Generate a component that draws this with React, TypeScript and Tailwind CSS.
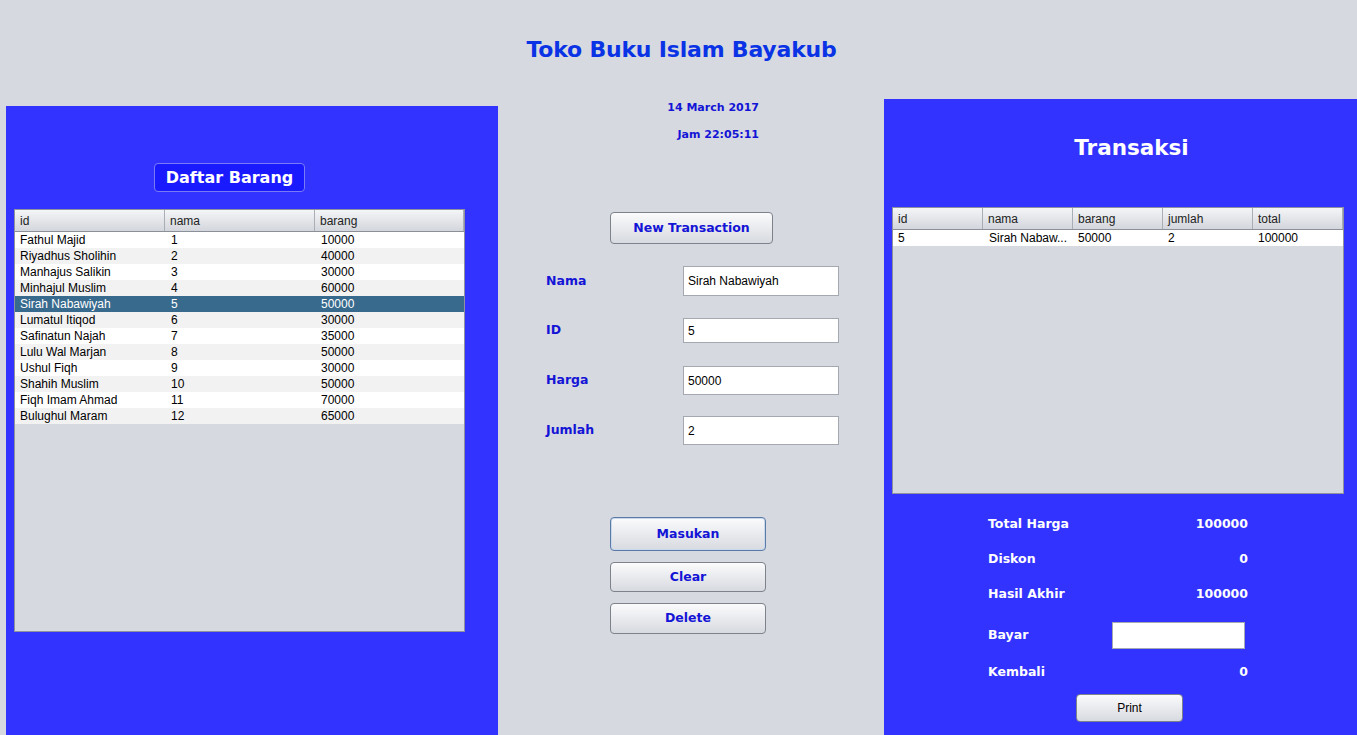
import React from "react";

const barang = [
  ["Fathul Majid", "1", "10000"],
  ["Riyadhus Sholihin", "2", "40000"],
  ["Manhajus Salikin", "3", "30000"],
  ["Minhajul Muslim", "4", "60000"],
  ["Sirah Nabawiyah", "5", "50000"],
  ["Lumatul Itiqod", "6", "30000"],
  ["Safinatun Najah", "7", "35000"],
  ["Lulu Wal Marjan", "8", "50000"],
  ["Ushul Fiqh", "9", "30000"],
  ["Shahih Muslim", "10", "50000"],
  ["Fiqh Imam Ahmad", "11", "70000"],
  ["Bulughul Maram", "12", "65000"],
];

const tahoma = { fontFamily: '"DejaVu Sans", Verdana, sans-serif' };

function HeaderCell({ label, w }: { label: string; w: string }) {
  return (
    <div className={`${w} h-full border-r border-[#a9adb5] bg-gradient-to-b from-[#f4f5f7] to-[#d3d6dc] pl-[5px] flex items-center text-[12px] text-[#222]`}>
      {label}
    </div>
  );
}

function SwingButton({ label, className, focused }: { label: string; className: string; focused?: boolean }) {
  return (
    <button
      className={`${className} rounded-[4px] border ${focused ? "border-[#5b7ba6] shadow-[inset_0_0_0_1px_#c9d8ec]" : "border-[#7d828b]"} bg-gradient-to-b from-[#fbfbfc] to-[#d7dae0] text-[#1414d6] font-bold text-[12.5px] flex items-center justify-center`}
      style={tahoma}
    >
      {label}
    </button>
  );
}

function FormRow({ label, value, h, mb }: { label: string; value: string; h: string; mb: string }) {
  return (
    <div className={`flex items-center ${mb}`}>
      <span className="w-[185px] pl-[48px] text-[12.5px] font-bold text-[#1414d6]" style={tahoma}>{label}</span>
      <div className={`w-[156px] ${h} bg-white border border-[#a4a8b0] flex items-center pl-[4px] text-[12px] text-black`}>
        {value}
      </div>
    </div>
  );
}

export default function App() {
  return (
    <div className="w-[1357px] h-[735px] bg-[#d6d9e0] overflow-hidden" style={{ fontFamily: '"Liberation Sans", Arial, sans-serif' }}>
      <div className="h-[99px] flex items-start justify-center pt-[33px] pl-[6px]">
        <h1 className="text-[22px] font-bold text-[#0a33e6] tracking-[-0.2px]" style={tahoma}>Toko Buku Islam Bayakub</h1>
      </div>

      <div className="flex h-[636px]">
        {/* Daftar Barang */}
        <div className="ml-[6px] mt-[7px] w-[492px] bg-[#3333ff] pt-[57px] pl-[8px]">
          <div className="ml-[140px] w-[151px] h-[29px] rounded-[4px] bg-[#1a1aff] border border-[#7a7af5] flex items-center justify-center text-white font-bold text-[16px]" style={tahoma}>
            Daftar Barang
          </div>
          <div className="mt-[17px] w-[451px] h-[423px] bg-[#d6d9e0] border border-[#8d929c] flex flex-col">
            <div className="h-[22px] flex border-b border-[#8a8f98] shrink-0">
              <HeaderCell label="id" w="w-[150px]" />
              <HeaderCell label="nama" w="w-[150px]" />
              <HeaderCell label="barang" w="w-[149px]" />
            </div>
            {barang.map((r, i) => {
              const sel = i === 4;
              const bg = sel ? "bg-[#386a8d] text-white" : i % 2 === 0 ? "bg-white text-black" : "bg-[#f2f2f2] text-black";
              return (
                <div key={i} className={`h-[16px] flex items-center text-[12px] ${bg}`}>
                  <span className="w-[150px] pl-[5px]">{r[0]}</span>
                  <span className="w-[150px] pl-[6px]">{r[1]}</span>
                  <span className="w-[149px] pl-[6px]">{r[2]}</span>
                </div>
              );
            })}
          </div>
        </div>

        {/* middle */}
        <div className="w-[386px] flex flex-col">
          <div className="flex flex-col items-end pr-[125px] pt-[2px] text-[11px] font-bold text-[#1414d6] leading-[14px]" style={tahoma}>
            <span>14 March 2017</span>
            <span className="mt-[13px]">Jam 22:05:11</span>
          </div>
          <SwingButton label="New Transaction" className="ml-[112px] mt-[70px] w-[163px] h-[32px]" />
          <div className="mt-[22px]">
            <FormRow label="Nama" value="Sirah Nabawiyah" h="h-[30px]" mb="mb-[22px]" />
            <FormRow label="ID" value="5" h="h-[25px]" mb="mb-[23px]" />
            <FormRow label="Harga" value="50000" h="h-[29px]" mb="mb-[21px]" />
            <FormRow label="Jumlah" value="2" h="h-[29px]" mb="" />
          </div>
          <div className="ml-[112px] mt-[72px] flex flex-col gap-[11px]">
            <SwingButton label="Masukan" className="w-[156px] h-[34px]" focused />
            <SwingButton label="Clear" className="w-[156px] h-[30px]" />
            <SwingButton label="Delete" className="w-[156px] h-[31px]" />
          </div>
        </div>

        {/* Transaksi */}
        <div className="w-[473px] bg-[#3333ff] pl-[8px] flex flex-col">
          <div className="h-[108px] flex items-center justify-center pl-[14px]">
            <span className="text-white text-[21.5px] font-bold mt-[-10px]" style={tahoma}>Transaksi</span>
          </div>
          <div className="w-[452px] h-[287px] bg-[#d6d9e0] border border-[#8d929c] flex flex-col">
            <div className="h-[22px] flex border-b border-[#8a8f98] shrink-0">
              <HeaderCell label="id" w="w-[90px]" />
              <HeaderCell label="nama" w="w-[90px]" />
              <HeaderCell label="barang" w="w-[90px]" />
              <HeaderCell label="jumlah" w="w-[90px]" />
              <HeaderCell label="total" w="w-[90px]" />
            </div>
            <div className="h-[16px] flex items-center text-[12px] bg-white text-black">
              <span className="w-[90px] pl-[5px]">5</span>
              <span className="w-[90px] pl-[6px]">Sirah Nabaw...</span>
              <span className="w-[90px] pl-[5px]">50000</span>
              <span className="w-[90px] pl-[5px]">2</span>
              <span className="w-[90px] pl-[5px]">100000</span>
            </div>
          </div>

          <div className="ml-[96px] w-[260px] mt-[20px] text-white font-bold text-[12.5px]" style={tahoma}>
            <div className="flex justify-between h-[20px] items-center"><span>Total Harga</span><span>100000</span></div>
            <div className="flex justify-between h-[20px] items-center mt-[15px]"><span>Diskon</span><span>0</span></div>
            <div className="flex justify-between h-[20px] items-center mt-[15px]"><span>Hasil Akhir</span><span>100000</span></div>
            <div className="flex justify-between items-center mt-[18px]">
              <span>Bayar</span>
              <div className="w-[133px] h-[27px] bg-white border border-[#a4a8b0] mr-[3px]" />
            </div>
            <div className="flex justify-between h-[20px] items-center mt-[13px]"><span>Kembali</span><span>0</span></div>
          </div>
          <div className="ml-[184px] mt-[12px]">
            <button className="w-[107px] h-[28px] rounded-[4px] border border-[#7d828b] bg-gradient-to-b from-[#fbfbfc] to-[#d7dae0] text-[12px] text-black">
              Print
            </button>
          </div>
        </div>
      </div>
    </div>
  );
}
